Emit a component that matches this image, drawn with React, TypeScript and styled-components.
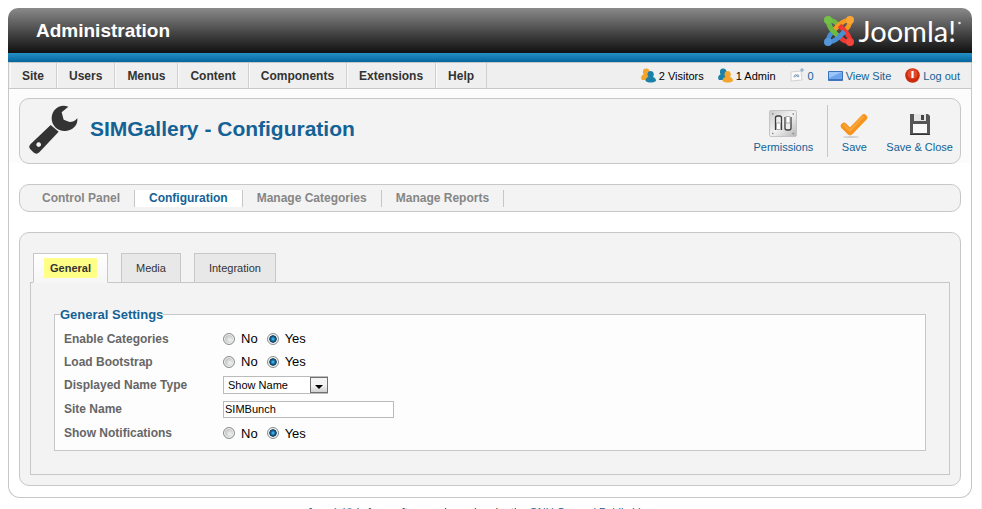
import React from "react";
import styled, { createGlobalStyle, css } from "styled-components";

const line = "#c7c7c7";
const blue = "#146295";

const Global = createGlobalStyle`
  * { box-sizing: border-box; }
  html { height: 100%; overflow: hidden; }
  body {
    margin: 0;
    background: #fff;
    font-family: "Liberation Sans", Arial, sans-serif;
    font-size: 12px;
    color: #333;
  }
  button, input, select { font-family: inherit; margin: 0; }
  a { text-decoration: none; }
`;

const Page = styled.div`
  min-height: 100vh;
  padding: 8px 9px 0 8px;
  border-right: 1px solid #f0f0f0;
`;

const Header = styled.header`
  display: flex;
  align-items: center;
  justify-content: space-between;
  height: 54px;
  padding: 0 11px 9px 28px;
  border-radius: 10px 10px 0 0;
  background:
    linear-gradient(#2590c8, #04669c) bottom / 100% 9px no-repeat,
    linear-gradient(#8a8a8a, #4c4c4c 50%, #101010) top / 100% 45px no-repeat;
`;

const SiteTitle = styled.h1`
  margin: 0;
  font-size: 19px;
  line-height: 24px;
  color: #fff;
`;

const Brand = styled.div`
  display: flex;
  align-items: center;
  gap: 4px;
  color: #fff;
`;

const BrandName = styled.span`
  display: flex;
  gap: 2px;
  font-family: Lato, sans-serif;
  font-weight: 400;
  font-size: 29px;
  line-height: 30px;
`;

const MenuBar = styled.div`
  display: flex;
  justify-content: space-between;
  height: 27px;
  border: 1px solid ${line};
  background: #efefef;
`;

const Menu = styled.nav`
  display: flex;
  padding-left: 1px;
`;

const MenuLink = styled.a`
  display: flex;
  align-items: center;
  padding: 0 12px;
  border-right: 1px solid #d0d0d0;
  box-shadow: inset 1px 0 #fafafa;
  font-weight: bold;
  color: #333;
`;

const Status = styled.div`
  display: flex;
  align-items: center;
  gap: 14px;
  padding-right: 11px;
  font-size: 11px;
`;

const statusItem = css`
  display: flex;
  align-items: center;
  gap: 3px;
`;

const StatusText = styled.span`
  ${statusItem}
  color: #000;
`;

const StatusLink = styled.a`
  ${statusItem}
  color: ${blue};
`;

const Body = styled.main`
  display: flex;
  flex-direction: column;
  gap: 20px;
  padding: 9px 10px 11px;
  border: 1px solid ${line};
  border-top: 0;
  border-radius: 0 0 12px 12px;
  background: linear-gradient(#fcfcfc, #fcfcfc) top / 100% 74px no-repeat #fff;
`;

const Panel = styled.section`
  border: 1px solid ${line};
  border-radius: 10px;
  background: #f3f3f3;
`;

const TitlePanel = styled(Panel)`
  display: flex;
  align-items: center;
  justify-content: space-between;
  height: 66px;
  padding: 0 7px 0 9px;
`;

const Heading = styled.h2`
  display: flex;
  align-items: center;
  gap: 12px;
  margin: 0;
  padding-bottom: 4px;
  font-size: 21px;
  color: ${blue};
`;

const Tools = styled.div`
  display: flex;
  align-items: center;
`;

const ToolButton = styled.button`
  display: flex;
  flex-direction: column;
  align-items: center;
  gap: 1px;
  min-width: 28px;
  padding: 2px 0 0;
  border: 0;
  background: none;
  font-size: 11px;
  line-height: 16px;
  color: ${blue};
  cursor: pointer;
  & + & { margin-left: 18px; }
`;

const ToolDivider = styled.span`
  width: 1px;
  height: 52px;
  margin: 0 12px 0 14px;
  background: ${line};
`;

const SubMenu = styled(Panel)`
  display: flex;
  align-items: center;
  height: 28px;
  padding-left: 8px;
`;

const SubLink = styled.a<{ $active?: boolean }>`
  padding: 0 14px;
  border-right: 1px solid ${line};
  line-height: 17px;
  font-weight: bold;
  color: ${(p) => (p.$active ? blue : "#868686")};
  background: ${(p) => (p.$active ? "#fff" : "none")};
`;

const Content = styled(Panel)`
  padding: 20px 10px 10px;
`;

const Tabs = styled.div`
  display: flex;
  gap: 13px;
  padding-left: 3px;
  position: relative;
`;

const Tab = styled.button<{ $active?: boolean }>`
  height: 30px;
  margin-bottom: -1px;
  padding: 0 ${(p) => (p.$active ? 10 : 14)}px;
  border: 1px solid ${line};
  border-bottom-color: ${(p) => (p.$active ? "#f6f6f6" : line)};
  background: ${(p) => (p.$active ? "linear-gradient(#fff, #f6f6f6)" : "#e8e8e8")};
  font-size: 11px;
  color: #333;
`;

const Highlight = styled.strong`
  display: block;
  padding: 0 6px;
  line-height: 20px;
  background: #ffff88;
`;

const Pane = styled.div`
  padding: 23px 23px;
  border: 1px solid ${line};
`;

const Fields = styled.fieldset`
  margin: 0;
  padding: 4px 5px 5px;
  border: 1px solid ${line};
  background: #fdfdfd;
`;

const Legend = styled.legend`
  padding: 0;
  font-size: 13px;
  line-height: 17px;
  font-weight: bold;
  color: ${blue};
`;

const Row = styled.div<{ $tall?: boolean }>`
  display: grid;
  grid-template-columns: 159px 1fr;
  align-items: center;
  height: ${(p) => (p.$tall ? 24 : 23)}px;
  padding: 0 4px;
`;

const Label = styled.label`
  font-weight: bold;
  color: #666;
`;

const Options = styled.div`
  display: flex;
  gap: 9px;
`;

const Option = styled.label`
  display: flex;
  align-items: center;
  gap: 6px;
  font-size: 13px;
  color: #000;
`;

const RadioInput = styled.input`
  appearance: none;
  width: 12px;
  height: 12px;
  border: 1px solid #8b8f91;
  border-radius: 50%;
  background: radial-gradient(circle at 60% 60%, #f4f4f4, #c4c4c4 60%);
  box-shadow: inset 0 0 0 1px #f4f4f4;
  &:checked {
    background: radial-gradient(circle, #63c9f5 0, #1678b0 25%, #0d3552 48%, #dfe6ea 58%);
  }
`;

const SelectBox = styled.div`
  position: relative;
  width: 105px;
`;

const Select = styled.select`
  display: block;
  appearance: none;
  width: 100%;
  height: 18px;
  padding: 0 20px 0 4px;
  border: 1px solid #bbb;
  border-radius: 0;
  background: #fff;
  font-size: 11px;
  color: #000;
`;

const SelectArrow = styled.span`
  position: absolute;
  top: 1px;
  right: 0;
  display: flex;
  width: 18px;
  height: 16px;
  align-items: flex-end;
  justify-content: center;
  padding-bottom: 3px;
  border: 1px solid #707070;
  background: linear-gradient(#f4f4f4 50%, #d2d2d2);
  pointer-events: none;
`;

const TextInput = styled.input`
  width: 171px;
  height: 17px;
  padding: 0 1px;
  border: 1px solid #bbb;
  background: #fff;
  font-size: 11px;
  color: #000;
`;

const Footer = styled.footer`
  padding-top: 6px;
  text-align: center;
  font-size: 11px;
  line-height: 16px;
  color: #333;
  a { color: ${blue}; }
`;

const arm = "M14 9C11.500 5.500 8 4 4 4c0 4 1.500 7 4 10l6.500 6.500";

const JoomlaMark = () => (
  <svg width="30" height="30" viewBox="0 0 30 30" fill="none" strokeWidth="4.600" strokeLinecap="butt" strokeLinejoin="round" aria-hidden="true">
    <path d={arm} stroke="#6cb944" />
    <path d={arm} stroke="#f59a1f" transform="rotate(90 15 15)" />
    <path d={arm} stroke="#ee3a32" transform="rotate(180 15 15)" />
    <path d={arm} stroke="#4a8ed4" transform="rotate(270 15 15)" />
    <path d="M5 7c.6 3 1.500 5 3 7l4 4" stroke="#6cb944" />
    <circle cx="4" cy="4" r="4" fill="#75c048" />
    <circle cx="26" cy="4" r="4" fill="#f9a434" />
    <circle cx="4" cy="26" r="4" fill="#5597da" />
    <circle cx="26" cy="26" r="4" fill="#f2453c" />
  </svg>
);

const BrandDot = () => (
  <svg width="3" height="10" viewBox="0 0 3 10" aria-hidden="true">
    <circle cx="1.500" cy="7" r="1.300" fill="#e4e4e4" />
  </svg>
);

const Wrench = () => (
  <svg width="49" height="49" viewBox="28 28 147 147" fill="#333" aria-hidden="true">
    <path d="M146 33C120 22 96 42 96 68c0 24 20 40 42 38 22-2 37-17 35-38-7 9-15 11-23 11l-18-7-6-22z" />
    <path d="M93 88l24 20-58 62q-9 8-18 0l-9-9q-7-8 1-16zM57 140a7 7 0 1 0 .1 0z" fillRule="evenodd" />
  </svg>
);

const People = ({ back, front }: { back: string; front: string }) => (
  <svg width="15" height="15" viewBox="0 0 15 15" aria-hidden="true">
    <path d="M5 .5c2.500 0 3.500 1.500 3.500 3.500L8 7l2 5H1c-1.500-2-1-4.500 1.500-5.500C1.500 4 1.500.5 5 .5z" fill={back} />
    <path d="M9.500 3c2.300 0 3.300 1.500 3.300 3.300 0 1.200-.3 2-.8 2.700 2.500.8 3 2.500 3 4-3 2-7.500 2-10.500 0 0-2 .8-3.500 3-4-.7-.8-1-1.500-1-2.700C6.500 4.500 7.500 3 9.500 3z" fill={front} />
  </svg>
);

const Mail = () => (
  <svg width="15" height="15" viewBox="0 0 15 15" aria-hidden="true">
    <path d="M1 4l10-1 1 9-11 1z" fill="#fbfbfb" stroke="#d2d2d2" />
    <path d="M4 8c1-2 3-1 3 0s2 1 2 0-2-2-3 0-2 1-2 0z" fill="none" stroke="#6f93ab" />
    <path d="M11 1h2v2h-2z" fill="none" stroke="#79a7c6" />
  </svg>
);

const Screen = () => (
  <svg width="15" height="15" viewBox="0 0 15 15" aria-hidden="true">
    <path d="M.5 3.500h14v9H.5z" fill="#6ea6ee" stroke="#3f74bd" />
    <path d="M1 4h13L1 10z" fill="#9cc5fa" />
    <path d="M1 11h13v1H1z" fill="#3f74bd" />
  </svg>
);

const Power = () => (
  <svg width="15" height="15" viewBox="0 0 15 15" aria-hidden="true">
    <circle cx="7.500" cy="7.500" r="7.300" fill="#cc2a0c" />
    <circle cx="7.500" cy="6" r="5" fill="#e2482a" />
    <path d="M7.500 3v7" stroke="#fff" strokeWidth="2.200" />
  </svg>
);

const Switches = () => (
  <svg width="28" height="28" viewBox="0 0 28 28" aria-hidden="true">
    <defs>
      <linearGradient id="plate" x1="0" y1="0" x2="1" y2="1">
        <stop offset="0" stopColor="#c9c9c9" />
        <stop offset=".5" stopColor="#f2f2f2" />
        <stop offset="1" stopColor="#b5b5b5" />
      </linearGradient>
    </defs>
    <rect x=".5" y=".5" width="27" height="26" rx="1.500" fill="url(#plate)" stroke="#c4c4c4" />
    <path d="M6.500 20V8q0-2 2-2h2q2 0 2 2v12" fill="#ededed" stroke="#3d3d3d" strokeWidth="1.300" />
    <path d="M16 7v11q0 2 2 2h2q2 0 2-2V7" fill="#ededed" stroke="#3d3d3d" strokeWidth="1.300" />
    <path d="M7.500 13h4v6.500h-4zM17 6.500h4V13h-4z" fill="#fff" stroke="#999" strokeWidth=".8" />
    <path d="M3 4h1.500M23.500 4H25M3 23.500h1.500M23.500 23.500H25" stroke="#888" strokeWidth="1.300" />
  </svg>
);

const Check = () => (
  <svg width="28" height="28" viewBox="0 0 28 28" aria-hidden="true">
    <ellipse cx="11" cy="27" rx="8" ry="1" fill="#d0d0d0" />
    <path d="M4 16l6 6L24 7.500" fill="none" stroke="#f7941e" strokeWidth="6.500" strokeLinejoin="round" strokeLinecap="round" />
    <path d="M3.500 14.500l6.500 6L23.500 6" fill="none" stroke="#f9a63a" strokeWidth="2" />
  </svg>
);

const Floppy = () => (
  <svg width="28" height="28" viewBox="0 0 28 28" aria-hidden="true">
    <path d="M4 4h18l2 2v19H4z" fill="#565656" />
    <path d="M8 4h12v7H8z" fill="#e4e4e4" />
    <path d="M15 5h3v5h-3z" fill="#444" />
    <path d="M7 14h14v9H7z" fill="#f8f8f8" />
    <path d="M4 24h20v1H4z" fill="#333" />
  </svg>
);

const menus = ["Site", "Users", "Menus", "Content", "Components", "Extensions", "Help"];
const sections = ["Control Panel", "Configuration", "Manage Categories", "Manage Reports"];

const YesNo = ({ name, label }: { name: string; label: string }) => (
  <Options role="radiogroup" aria-label={label}>
    <Option><RadioInput type="radio" name={name} value="0" />No</Option>
    <Option><RadioInput type="radio" name={name} value="1" defaultChecked />Yes</Option>
  </Options>
);

export default function App() {
  return (
    <Page>
      <Global />
      <Header>
        <SiteTitle>Administration</SiteTitle>
        <Brand>
          <JoomlaMark />
          <BrandName>Joomla!<BrandDot /></BrandName>
        </Brand>
      </Header>
      <MenuBar>
        <Menu>{menus.map((m) => <MenuLink href="#" key={m}>{m}</MenuLink>)}</Menu>
        <Status>
          <StatusText><People back="#f5a52c" front="#1c81a8" />2 Visitors</StatusText>
          <StatusText><People back="#1c81a8" front="#f5a52c" />1 Admin</StatusText>
          <StatusLink href="#"><Mail />0</StatusLink>
          <StatusLink href="#"><Screen />View Site</StatusLink>
          <StatusLink href="#"><Power />Log out</StatusLink>
        </Status>
      </MenuBar>
      <Body>
        <TitlePanel>
          <Heading><Wrench />SIMGallery - Configuration</Heading>
          <Tools>
            <ToolButton type="button"><Switches />Permissions</ToolButton>
            <ToolDivider />
            <ToolButton type="button"><Check />Save</ToolButton>
            <ToolButton type="button"><Floppy />Save &amp; Close</ToolButton>
          </Tools>
        </TitlePanel>
        <SubMenu as="nav">
          {sections.map((s) => <SubLink href="#" key={s} $active={s === "Configuration"}>{s}</SubLink>)}
        </SubMenu>
        <Content>
          <Tabs role="tablist">
            <Tab type="button" role="tab" aria-selected="true" $active><Highlight>General</Highlight></Tab>
            <Tab type="button" role="tab" aria-selected="false">Media</Tab>
            <Tab type="button" role="tab" aria-selected="false">Integration</Tab>
          </Tabs>
          <Pane role="tabpanel">
            <Fields>
              <Legend>General Settings</Legend>
              <Row><Label as="span">Enable Categories</Label><YesNo name="categories" label="Enable Categories" /></Row>
              <Row><Label as="span">Load Bootstrap</Label><YesNo name="bootstrap" label="Load Bootstrap" /></Row>
              <Row $tall>
                <Label htmlFor="nameType">Displayed Name Type</Label>
                <SelectBox>
                  <Select id="nameType" defaultValue="name"><option value="name">Show Name</option></Select>
                  <SelectArrow><svg width="8" height="4" viewBox="0 0 8 4" aria-hidden="true"><path d="M0 0h8L4 4z" /></svg></SelectArrow>
                </SelectBox>
              </Row>
              <Row $tall>
                <Label htmlFor="siteName">Site Name</Label>
                <TextInput id="siteName" type="text" defaultValue="SIMBunch" />
              </Row>
              <Row $tall><Label as="span">Show Notifications</Label><YesNo name="notifications" label="Show Notifications" /></Row>
            </Fields>
          </Pane>
        </Content>
      </Body>
      <Footer>
        <a href="#">Joomla!®</a> is free software released under the <a href="#">GNU General Public License</a>.
      </Footer>
    </Page>
  );
}
